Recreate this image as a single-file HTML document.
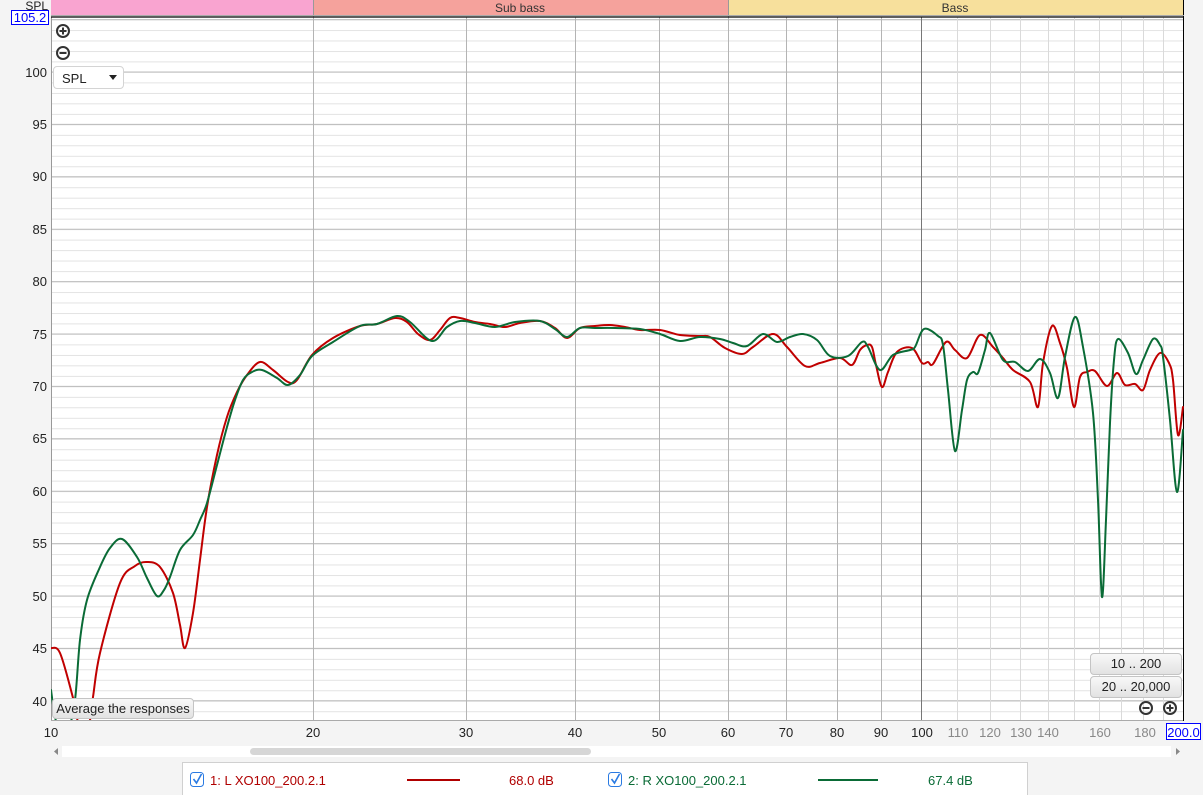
<!DOCTYPE html>
<html><head><meta charset="utf-8"><style>
body{margin:0;background:#f4f4f4;font-family:"Liberation Sans",sans-serif;}
.wrap{position:relative;width:1203px;height:795px;overflow:hidden;background:#f4f4f4}
svg{position:absolute;left:0;top:0}
.btn{position:absolute;background:linear-gradient(#f8f8f8,#e2e2e2);border:1px solid #c4c4c4;border-radius:4px;font-size:13px;color:#222;text-align:center;box-sizing:border-box}
</style></head><body><div class="wrap">
<svg width="1203" height="795" font-family="Liberation Sans, sans-serif">
<defs>
<pattern id="hp" patternUnits="userSpaceOnUse" x="0" y="72" width="10" height="10.48"><line x1="0" y1="0.3" x2="10" y2="0.3" stroke="#dcdcdc" stroke-width="1"/></pattern>
<clipPath id="pc"><rect x="51" y="17" width="1133" height="703"/></clipPath>
</defs>
<rect x="51" y="17" width="1133" height="703" fill="#fff"/>
<rect x="51" y="17" width="1133" height="703" fill="url(#hp)"/>
<g stroke="#bcbcbc" stroke-width="1">
<line x1="51" x2="1184" y1="19.6" y2="19.6"/><line x1="51" x2="1184" y1="72" y2="72"/><line x1="51" x2="1184" y1="124.4" y2="124.4"/><line x1="51" x2="1184" y1="176.8" y2="176.8"/><line x1="51" x2="1184" y1="229.2" y2="229.2"/><line x1="51" x2="1184" y1="281.6" y2="281.6"/><line x1="51" x2="1184" y1="334" y2="334"/><line x1="51" x2="1184" y1="386.4" y2="386.4"/><line x1="51" x2="1184" y1="438.8" y2="438.8"/><line x1="51" x2="1184" y1="491.2" y2="491.2"/><line x1="51" x2="1184" y1="543.6" y2="543.6"/><line x1="51" x2="1184" y1="596" y2="596"/><line x1="51" x2="1184" y1="648.4" y2="648.4"/><line x1="51" x2="1184" y1="700.8" y2="700.8"/>
</g>
<g stroke="#b4b4b4" stroke-width="1">
<line x1="313.5" x2="313.5" y1="0" y2="720"/><line x1="466.5" x2="466.5" y1="17" y2="720"/><line x1="575.5" x2="575.5" y1="17" y2="720"/><line x1="659.5" x2="659.5" y1="17" y2="720"/><line x1="728.5" x2="728.5" y1="0" y2="720"/><line x1="786.5" x2="786.5" y1="17" y2="720"/><line x1="837.5" x2="837.5" y1="17" y2="720"/><line x1="881.5" x2="881.5" y1="17" y2="720"/>
</g>
<line x1="921.5" x2="921.5" y1="17" y2="720" stroke="#777"/>
<g stroke="#dadada" stroke-width="1">
<line x1="957.5" x2="957.5" y1="17" y2="720"/><line x1="990.5" x2="990.5" y1="17" y2="720"/><line x1="1020.5" x2="1020.5" y1="17" y2="720"/><line x1="1048.5" x2="1048.5" y1="17" y2="720"/><line x1="1074.5" x2="1074.5" y1="17" y2="720"/><line x1="1099.5" x2="1099.5" y1="17" y2="720"/><line x1="1121.5" x2="1121.5" y1="17" y2="720"/><line x1="1143.5" x2="1143.5" y1="17" y2="720"/><line x1="1163.5" x2="1163.5" y1="17" y2="720"/>
</g>
<line x1="51.5" x2="51.5" y1="17" y2="720" stroke="#999"/>
<line x1="51" x2="1184" y1="720.5" y2="720.5" stroke="#aaa"/>
<line x1="1183.5" x2="1183.5" y1="0" y2="721" stroke="#000"/>
<line x1="51" x2="1184" y1="17" y2="17" stroke="#000" stroke-width="1.2"/>
<rect x="51" y="0" width="262" height="15" fill="#f9a4d0"/>
<rect x="313" y="0" width="415" height="15" fill="#f5a29c"/>
<rect x="729" y="0" width="454" height="15" fill="#f7e09c"/>
<line x1="51" x2="1184" y1="15.5" y2="15.5" stroke="#aaa"/>
<g stroke="#999"><line x1="313.5" x2="313.5" y1="0" y2="15"/><line x1="728.5" x2="728.5" y1="0" y2="15"/></g>
<text x="520" y="12" font-size="12" fill="#333" text-anchor="middle">Sub bass</text>
<text x="955" y="12" font-size="12" fill="#333" text-anchor="middle">Bass</text>
<g clip-path="url(#pc)" fill="none" stroke-width="2" stroke-linejoin="round" stroke-linecap="round">
<polyline class="cv" stroke="#c00000" points="51,648 60,653 73,698 80,730 88,730 93,697 100,653 120,583 135,566 147,562 160,567 173,593 180,625 185,648 193,613 200,560 207,507 217,455 227,417 237,392 247,375 260,362 273,370 288,382 297,380 312,355 333,338 360,326 377,324 395,318 407,322 418,334 430,340 440,330 450,318 460,318 475,322 490,324 505,327 520,323 540,321 555,328 567,338 580,328 595,326 610,325 625,327 640,330 660,330 680,335 700,336 710,337 725,348 742,354 753,347 773,334 787,347 805,366 820,363 840,358 852,365 860,350 867,345 872,347 876,365 882,387 888,372 897,352 912,348 922,363 928,362 933,364 946,342 955,350 967,358 980,335 993,347 1003,358 1013,370 1030,382 1038,407 1043,363 1052,326 1060,343 1067,368 1074,407 1080,377 1087,372 1095,371 1107,386 1117,373 1125,385 1135,384 1143,390 1150,370 1160,353 1169,363 1173,380 1178,435 1183,407"/>
<polyline class="cv" stroke="#0a6b36" points="51,690 55,717 60,730 68,730 75,700 80,640 87,600 100,567 110,548 122,539 137,557 147,578 157,596 164,590 170,577 180,550 193,535 200,520 207,503 217,465 227,427 235,400 243,380 252,372 262,370 277,378 288,385 300,375 312,356 333,342 360,326 377,324 397,316 410,322 432,341 447,327 460,321 475,323 495,327 515,322 540,321 555,329 567,337 580,328 595,328 615,328 640,329 660,334 680,341 700,337 720,339 733,343 747,346 763,334 777,342 790,337 803,334 817,340 830,356 848,356 862,342 868,347 880,370 893,355 910,350 915,347 924,329 938,336 943,345 948,390 955,451 962,410 967,380 973,372 978,373 985,350 990,333 1003,360 1015,362 1028,371 1040,359 1050,373 1058,398 1065,357 1075,317 1083,347 1093,413 1098,500 1102,597 1106,520 1110,423 1114,360 1118,339 1128,353 1136,374 1143,360 1153,339 1160,345 1163,357 1170,420 1177,492 1183,430"/>
</g>
<g font-size="13" fill="#222" text-anchor="end">
<text x="47" y="77">100</text><text x="47" y="129">95</text><text x="47" y="181">90</text><text x="47" y="234">85</text><text x="47" y="286">80</text><text x="47" y="339">75</text><text x="47" y="391">70</text><text x="47" y="443">65</text><text x="47" y="496">60</text><text x="47" y="548">55</text><text x="47" y="601">50</text><text x="47" y="653">45</text><text x="47" y="706">40</text>
</g>
<text x="48" y="10" font-size="12" fill="#222" text-anchor="end">SPL</text>
<rect x="11.5" y="10.5" width="37" height="14" fill="#fff" stroke="#00f"/>
<text x="30" y="22" font-size="13" fill="#00f" text-anchor="middle">105.2</text>
<g font-size="13" fill="#222" text-anchor="middle">
<text x="51" y="737">10</text><text x="313" y="737">20</text><text x="466" y="737">30</text><text x="575" y="737">40</text><text x="659" y="737">50</text><text x="728" y="737">60</text><text x="786" y="737">70</text><text x="837" y="737">80</text><text x="881" y="737">90</text><text x="922" y="737">100</text>
</g>
<g font-size="13" fill="#888" text-anchor="middle">
<text x="958" y="737">110</text><text x="990" y="737">120</text><text x="1021" y="737">130</text><text x="1048" y="737">140</text><text x="1100" y="737">160</text><text x="1145" y="737">180</text>
</g>
<rect x="1166.5" y="723.5" width="34" height="16" fill="#fff" stroke="#00f"/>
<text x="1183.5" y="737" font-size="13" fill="#00f" text-anchor="middle">200.0</text>
<rect x="62" y="746" width="1109" height="11" fill="#fff"/>
<rect x="250" y="748" width="341" height="7" rx="3.5" fill="#d6d6d6"/>
<path d="M58,748 L54,751.5 L58,755Z" fill="#888"/>
<path d="M1176,748 L1180,751.5 L1176,755Z" fill="#888"/>
<g stroke="#333" stroke-width="2" fill="none">
<circle cx="63" cy="31" r="6"/><line x1="59.5" y1="31" x2="66.5" y2="31"/><line x1="63" y1="27.5" x2="63" y2="34.5"/>
<circle cx="63" cy="53" r="6"/><line x1="59.5" y1="53" x2="66.5" y2="53"/>
<circle cx="1146" cy="708" r="6"/><line x1="1142.5" y1="708" x2="1149.5" y2="708"/>
<circle cx="1170" cy="708" r="6"/><line x1="1166.5" y1="708" x2="1173.5" y2="708"/><line x1="1170" y1="704.5" x2="1170" y2="711.5"/>
</g>
<rect x="182.5" y="762.5" width="845" height="40" fill="#fff" stroke="#d0d0d0"/>
<rect x="190.5" y="772.5" width="13" height="14" rx="3" fill="#fff" stroke="#2a7ae2"/>
<path d="M193.5,779 L196.5,783 L201.5,774" stroke="#2a7ae2" stroke-width="1.6" fill="none"/>
<text x="210" y="785" font-size="13" fill="#b00000">1: L XO100_200.2.1</text>
<line x1="407" x2="460" y1="780" y2="780" stroke="#b00000" stroke-width="2"/>
<text x="509" y="785" font-size="13" fill="#b00000">68.0 dB</text>
<rect x="608.5" y="772.5" width="13" height="14" rx="3" fill="#fff" stroke="#2a7ae2"/>
<path d="M611.5,779 L614.5,783 L619.5,774" stroke="#2a7ae2" stroke-width="1.6" fill="none"/>
<text x="628" y="785" font-size="13" fill="#0a6b36">2: R XO100_200.2.1</text>
<line x1="818" x2="878" y1="780" y2="780" stroke="#0a6b36" stroke-width="2"/>
<text x="928" y="785" font-size="13" fill="#0a6b36">67.4 dB</text>
</svg>
<div class="btn" style="left:53px;top:66px;width:71px;height:23px;background:#fff;border-color:#d4d4d4;text-align:left;padding:4px 0 0 8px;">SPL<span style="position:absolute;left:55px;top:8px;width:0;height:0;border-left:4px solid transparent;border-right:4px solid transparent;border-top:5px solid #222"></span></div>
<div class="btn" style="left:52px;top:698px;width:142px;height:21px;line-height:19px;">Average the responses</div>
<div class="btn" style="left:1090px;top:653px;width:92px;height:22px;line-height:20px;">10 .. 200</div>
<div class="btn" style="left:1090px;top:676px;width:92px;height:22px;line-height:20px;">20 .. 20,000</div>
</div>
<script>
document.querySelectorAll('polyline.cv').forEach(function(pl){
  var p=pl.getAttribute('points').trim().split(/\s+/).map(function(s){return s.split(',').map(Number);});
  var d='M'+p[0][0]+','+p[0][1];
  for(var i=0;i<p.length-1;i++){
    var p0=p[i-1]||p[i],p1=p[i],p2=p[i+1],p3=p[i+2]||p2;
    var c1x=p1[0]+(p2[0]-p0[0])/6,c1y=p1[1]+(p2[1]-p0[1])/6;
    var c2x=p2[0]-(p3[0]-p1[0])/6,c2y=p2[1]-(p3[1]-p1[1])/6;
    d+=' C'+c1x.toFixed(1)+','+c1y.toFixed(1)+' '+c2x.toFixed(1)+','+c2y.toFixed(1)+' '+p2[0]+','+p2[1];
  }
  var path=document.createElementNS('http://www.w3.org/2000/svg','path');
  path.setAttribute('d',d);path.setAttribute('stroke',pl.getAttribute('stroke'));
  pl.parentNode.replaceChild(path,pl);
});
</script>
</body></html>
